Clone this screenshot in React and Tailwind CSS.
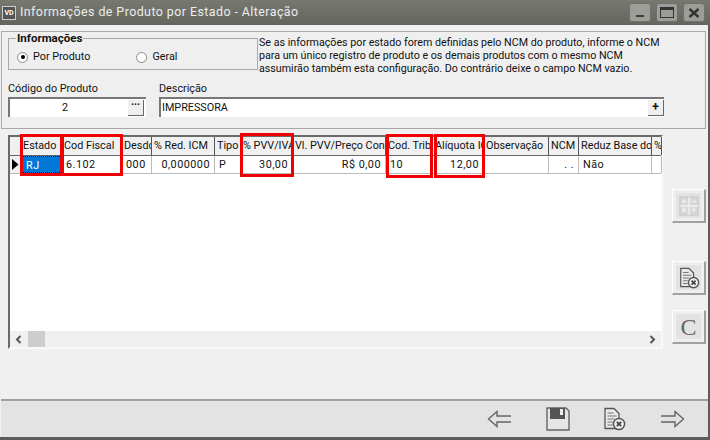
import React from 'react';

const font = { fontFamily: 'Roboto, Tahoma, sans-serif' };

const columns = [
  { label: 'Estado', w: 41 },
  { label: 'Cod Fiscal', w: 60 },
  { label: 'Desdo', w: 30 },
  { label: '% Red. ICM', w: 63 },
  { label: 'Tipo', w: 26 },
  { label: '% PVV/IVA', w: 52 },
  { label: 'Vl. PVV/Preço Cons', w: 93 },
  { label: 'Cod. Trib', w: 47 },
  { label: 'Alíquota ICMS', w: 51 },
  { label: 'Observação', w: 65 },
  { label: 'NCM', w: 30 },
  { label: 'Reduz Base do', w: 73 },
  { label: '%', w: 10 },
];

const row = [
  { v: 'RJ', sel: true },
  { v: '6.102' },
  { v: '000' },
  { v: '0,000000', right: true },
  { v: 'P' },
  { v: '30,00', right: true },
  { v: 'R$ 0,00', right: true },
  { v: '10' },
  { v: '12,00', right: true },
  { v: '' },
  { v: '.  .', right: true },
  { v: 'Não' },
  { v: '' },
];

function RedBox({ className }) {
  return <div className={`absolute border-[3px] border-[#f00000] pointer-events-none ${className}`} />;
}

function WinButton({ children }) {
  return (
    <div className="w-[22px] h-[19px] rounded-[3px] bg-[#9c9c98] border border-[#6f716a] flex items-center justify-center">
      {children}
    </div>
  );
}

function SideButton({ children, className = '' }) {
  return (
    <div className={`w-[34px] h-[34px] bg-[#efefef] border-t border-l border-t-white border-l-white border-r-2 border-b-2 border-r-[#a0a0a0] border-b-[#a0a0a0] flex items-center justify-center ${className}`}>
      <div className="w-[25px] h-[25px] bg-[#e3e3e3] flex items-center justify-center">{children}</div>
    </div>
  );
}

function DocCancel({ size = 24 }) {
  return (
    <svg width={size} height={size} viewBox="0 0 24 24" fill="none">
      <path d="M3 1.5h9l5 5v15H3z" fill="#e8e8e8" stroke="#555" strokeWidth="1.3" />
      <path d="M5.5 6h6M5.5 9h9M5.5 12h7M5.5 15h5M5.5 18h5" stroke="#777" strokeWidth="1.2" />
      <circle cx="17" cy="17" r="5.6" fill="#eee" stroke="#555" strokeWidth="1.5" />
      <path d="M14.8 14.8l4.4 4.4M19.2 14.8l-4.4 4.4" stroke="#444" strokeWidth="1.8" />
    </svg>
  );
}

export default function App() {
  return (
    <div className="w-[710px] h-[440px] flex flex-col overflow-hidden bg-[#f0f0f0] text-[10.8px] text-[#111]" style={font}>
      <div className="h-[25px] shrink-0 flex items-center bg-gradient-to-b from-[#777970] to-[#64665e] pl-[2px] pr-[5px]">
        <div className="w-[14px] h-[14px] border border-[#ccc] bg-[#555] text-white text-[7px] font-bold leading-[12px] text-center">VD</div>
        <div className="ml-[4px] text-[12.4px] tracking-[0.45px] text-[#ececec] whitespace-nowrap">
          Informações de Produto por Estado - Alteração
        </div>
        <div className="ml-auto flex gap-[5px]">
          <WinButton><div className="w-[8px] h-[2px] mt-[7px] bg-[#3a3a3a]" /></WinButton>
          <WinButton><div className="w-[14px] h-[11px] border border-[#333] border-t-[3px]" /></WinButton>
          <WinButton>
            <svg width="12" height="10" viewBox="0 0 12 10"><path d="M1.5 1l9 8M10.5 1l-9 8" stroke="#333" strokeWidth="2.4" /></svg>
          </WinButton>
        </div>
      </div>

      <div className="flex-1 min-h-0 pt-[6px] pl-px border-r-[2px] border-r-[#5c5c5c] flex flex-col">
        <div className="h-[98px] mr-[2px] border border-[#a8a8a8] bg-[#efefef] px-[6px] pt-[6px]">
          <div className="flex">
            <div className="relative w-[250px] h-[32px] border border-[#a8a8a8]">
              <span className="absolute left-[7px] top-[-7px] bg-[#efefef] px-px font-bold leading-[13px] text-[11.5px]">Informações</span>
              <div className="flex items-center h-full pt-[6px] pl-[8px]">
                <span className="w-[11px] h-[11px] rounded-full border border-[#888] bg-white flex items-center justify-center">
                  <span className="w-[4px] h-[4px] rounded-full bg-black" />
                </span>
                <span className="ml-[5px]">Por Produto</span>
                <span className="ml-[46px] w-[11px] h-[11px] rounded-full border border-[#888] bg-white" />
                <span className="ml-[5px]">Geral</span>
              </div>
            </div>
            <div className="ml-[1px] text-[10.7px] leading-[13px] -mt-[2px] whitespace-nowrap">
              <div>Se as informações por estado forem definidas pelo NCM do produto, informe o NCM</div>
              <div>para um único registro de produto e os demais produtos com o mesmo NCM</div>
              <div>assumirão também esta configuração. Do contrário deixe o campo NCM vazio.</div>
            </div>
          </div>
          <div className="flex mt-[7px]">
            <div className="w-[151px]">
              <div className="leading-[14px]">Código do Produto</div>
              <div className="w-[138px] h-[20px] mt-[1px] border-t-2 border-l-2 border-t-[#777] border-l-[#777] bg-white flex items-center">
                <span className="flex-1 text-center pr-[8px]">2</span>
                <span className="w-[16px] h-[16px] bg-[#efefef] border-r border-b border-r-[#666] border-b-[#666] text-[10px] font-bold leading-[10px] text-center mr-[2px]">···</span>
              </div>
            </div>
            <div>
              <div className="leading-[14px]">Descrição</div>
              <div className="w-[505px] h-[20px] mt-[1px] border-t-2 border-l-2 border-t-[#777] border-l-[#777] bg-white flex items-center pl-[1px]">
                <span>IMPRESSORA</span>
                <span className="ml-auto w-[16px] h-[16px] bg-[#efefef] border-r border-b border-r-[#666] border-b-[#666] font-bold text-[12px] leading-[14px] text-center">+</span>
              </div>
            </div>
          </div>
        </div>

        <div className="flex-1 min-h-0 flex pl-[7px] pt-[6px]">
          <div className="relative w-[655px] h-[214px] border-l-2 border-t-2 border-l-[#6a6a6a] border-t-[#6a6a6a] border-b-2 border-r-2 border-b-[#f8f8f8] border-r-[#f8f8f8] bg-white flex flex-col">
            <div className="flex h-[19px] bg-[#f0f0f0] border-b border-b-[#666]">
              <div className="w-[11px] shrink-0 border-r border-r-[#555]" />
              {columns.map((c) => (
                <div key={c.label} style={{ width: c.w }} className="shrink-0 border-r border-r-[#555] pl-[2px] overflow-hidden whitespace-nowrap leading-[18px]">
                  {c.label}
                </div>
              ))}
            </div>
            <div className="flex h-[18px] border-b border-b-[#bbb]">
              <div className="w-[11px] shrink-0 border-r border-r-[#bbb] bg-[#f0f0f0] flex items-center pl-[2px]">
                <svg width="7" height="11" viewBox="0 0 7 11"><path d="M0 0l6.5 5.5L0 11z" fill="#000" /></svg>
              </div>
              {row.map((c, i) => (
                <div
                  key={i}
                  style={{ width: columns[i].w }}
                  className={`shrink-0 border-r border-r-[#bbb] px-[4px] tracking-[0.5px] leading-[17px] whitespace-nowrap overflow-hidden ${c.right ? 'text-right' : ''} ${c.sel ? 'bg-[#0078d7] text-white border border-dotted border-[#111]' : ''}`}
                >
                  {c.v}
                </div>
              ))}
            </div>
            <div className="flex-1" />
            <div className="h-[16px] bg-[#f0f0f0] flex items-center justify-between px-[5px]">
              <div className="flex items-center">
                <svg width="7" height="9" viewBox="0 0 7 9"><path d="M5.5 1L2 4.5 5.5 8" stroke="#555" strokeWidth="2" fill="none" /></svg>
                <div className="ml-[6px] w-[17px] h-[16px] bg-[#cdcdcd]" />
              </div>
              <svg width="7" height="9" viewBox="0 0 7 9"><path d="M1.5 1L5 4.5 1.5 8" stroke="#555" strokeWidth="2" fill="none" /></svg>
            </div>
            <RedBox className="left-[10px] top-[-3px] w-[43px] h-[42px]" />
            <RedBox className="left-[51px] top-[-3px] w-[62px] h-[42px]" />
            <RedBox className="left-[230px] top-[-4px] w-[54px] h-[44px]" />
            <RedBox className="left-[376px] top-[-3px] w-[47px] h-[44px]" />
            <RedBox className="left-[424px] top-[-3px] w-[51px] h-[44px]" />
          </div>
          <div className="ml-[9px] flex flex-col pt-[54px]">
            <SideButton>
              <svg width="20" height="20" viewBox="0 0 20 20" fill="none">
                <rect x="1" y="1" width="18" height="18" fill="#d8d8d8" stroke="#c4c4c4" />
                <path d="M10 1v18M1 10h18" stroke="#efefef" strokeWidth="1.5" />
                <path d="M3 5.5h4M5 3.5v4M13 5.5h4M3.5 12.5l3 3M6.5 12.5l-3 3M13 14h4M15 12v4" stroke="#f2f2f2" strokeWidth="1.2" />
              </svg>
            </SideButton>
            <SideButton className="mt-[38px]"><DocCancel size={22} /></SideButton>
            <SideButton className="mt-[15px]">
              <span className="text-[24px] leading-[24px] text-[#666]" style={{ fontFamily: '"Liberation Serif", serif' }}>C</span>
            </SideButton>
          </div>
        </div>

        <div className="h-[38px] shrink-0 bg-[#e3e3e3] border-t-2 border-t-[#a0a0a0] flex items-center justify-end">
          <svg className="mr-[33px]" width="26" height="18" viewBox="0 0 26 18" fill="none">
            <path d="M24 6H10V1.5L1.5 9l8.5 7.5V12h14" stroke="#666" strokeWidth="1.4" />
          </svg>
          <svg className="mr-[32px]" width="24" height="24" viewBox="0 0 24 24" fill="none">
            <path d="M1 1h19l3 3v19H1z" fill="#e6e6e6" stroke="#666" strokeWidth="1.4" />
            <path d="M4 1h15v11H4z" fill="#555" />
            <path d="M14 2h3v6h-3z" fill="#eee" />
          </svg>
          <div className="mr-[33px]"><DocCancel size={24} /></div>
          <svg className="mr-[23px]" width="26" height="18" viewBox="0 0 26 18" fill="none">
            <path d="M2 6h14V1.5L24.5 9 16 16.5V12H2" stroke="#666" strokeWidth="1.4" />
          </svg>
        </div>
        <div className="h-[3px] shrink-0 bg-[#5c5c5c] -ml-px" />
      </div>
    </div>
  );
}
